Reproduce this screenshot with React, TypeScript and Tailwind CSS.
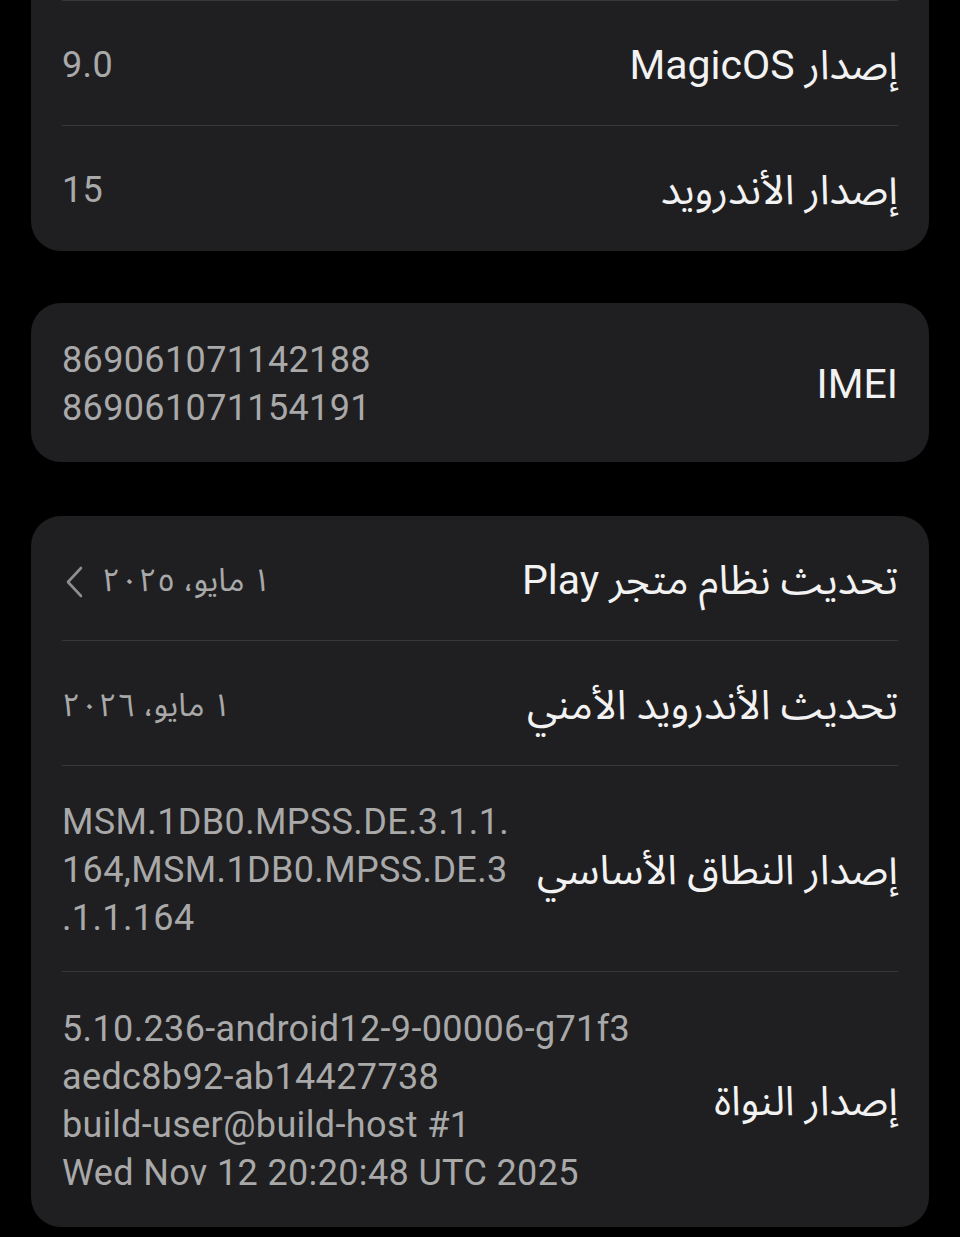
import React from "react";

type Row = {
  title: string;
  value: string[];
  arabicValue?: boolean;
  chevron?: boolean;
  pad?: string;
};

const font = {
  fontFamily: "Roboto, 'Noto Sans Arabic', 'DejaVu Sans', sans-serif",
};

const InfoRow: React.FC<{ row: Row; last?: boolean }> = ({ row, last }) => (
  <div
    className={
      "flex min-h-[125px] items-center justify-between gap-[20px] " +
      (row.pad ?? "pt-[33px] pb-[30px]") +
      (last ? "" : " border-b border-[#38383a]")
    }
  >
    <div className="shrink-0 text-[41px] leading-[48px] text-[#f2f2f2]">{row.title}</div>
    {row.arabicValue ? (
      <div className="flex items-center gap-[16px] text-[32px] leading-[48px] text-[#a9a9a9]">
        <span>{row.value[0]}</span>
        {row.chevron && (
          <svg width="24" height="34" viewBox="0 0 24 34" className="mt-1">
            <path d="M19 3 L6 17 L19 31" fill="none" stroke="#8e8e90" strokeWidth="2.6" strokeLinecap="round" strokeLinejoin="round" />
          </svg>
        )}
      </div>
    ) : (
      <div dir="ltr" className="text-left text-[36px] leading-[48px] tracking-[0.01em] text-[#a9a9a9]">
        {row.value.map((line, i) => (
          <div key={i}>{line}</div>
        ))}
      </div>
    )}
  </div>
);

const Card: React.FC<{ rows: Row[]; cutTop?: boolean }> = ({ rows, cutTop }) => (
  <div
    className={
      "mx-[31px] bg-[#1f1f21] px-[31px] " + (cutTop ? "rounded-b-[30px]" : "rounded-[30px]")
    }
  >
    {cutTop && <div className="h-px bg-[#38383a]" />}
    {rows.map((row, i) => (
      <InfoRow key={i} row={row} last={i === rows.length - 1} />
    ))}
  </div>
);

export default function App() {
  return (
    <div dir="rtl" style={font} className="min-h-[1237px] bg-black pb-[11px]">
      <Card
        cutTop
        rows={[
          { title: "إصدار MagicOS", value: ["9.0"] },
          { title: "إصدار الأندرويد", value: ["15"] },
        ]}
      />
      <div className="h-[52px]" />
      <Card rows={[{ title: "IMEI", value: ["869061071142188", "869061071154191"] }]} />
      <div className="h-[54px]" />
      <Card
        rows={[
          { title: "تحديث نظام متجر Play", value: ["١ مايو، ٢٠٢٥"], arabicValue: true, chevron: true },
          { title: "تحديث الأندرويد الأمني", value: ["١ مايو، ٢٠٢٦"], arabicValue: true },
          {
            title: "إصدار النطاق الأساسي",
            value: ["MSM.1DB0.MPSS.DE.3.1.1.", "164,MSM.1DB0.MPSS.DE.3", ".1.1.164"],
            pad: "pt-[32px] pb-[29px]",
          },
          {
            title: "إصدار النواة",
            value: [
              "5.10.236-android12-9-00006-g71f3",
              "aedc8b92-ab14427738",
              "build-user@build-host #1",
              "Wed Nov 12 20:20:48 UTC 2025",
            ],
          },
        ]}
      />
    </div>
  );
}
